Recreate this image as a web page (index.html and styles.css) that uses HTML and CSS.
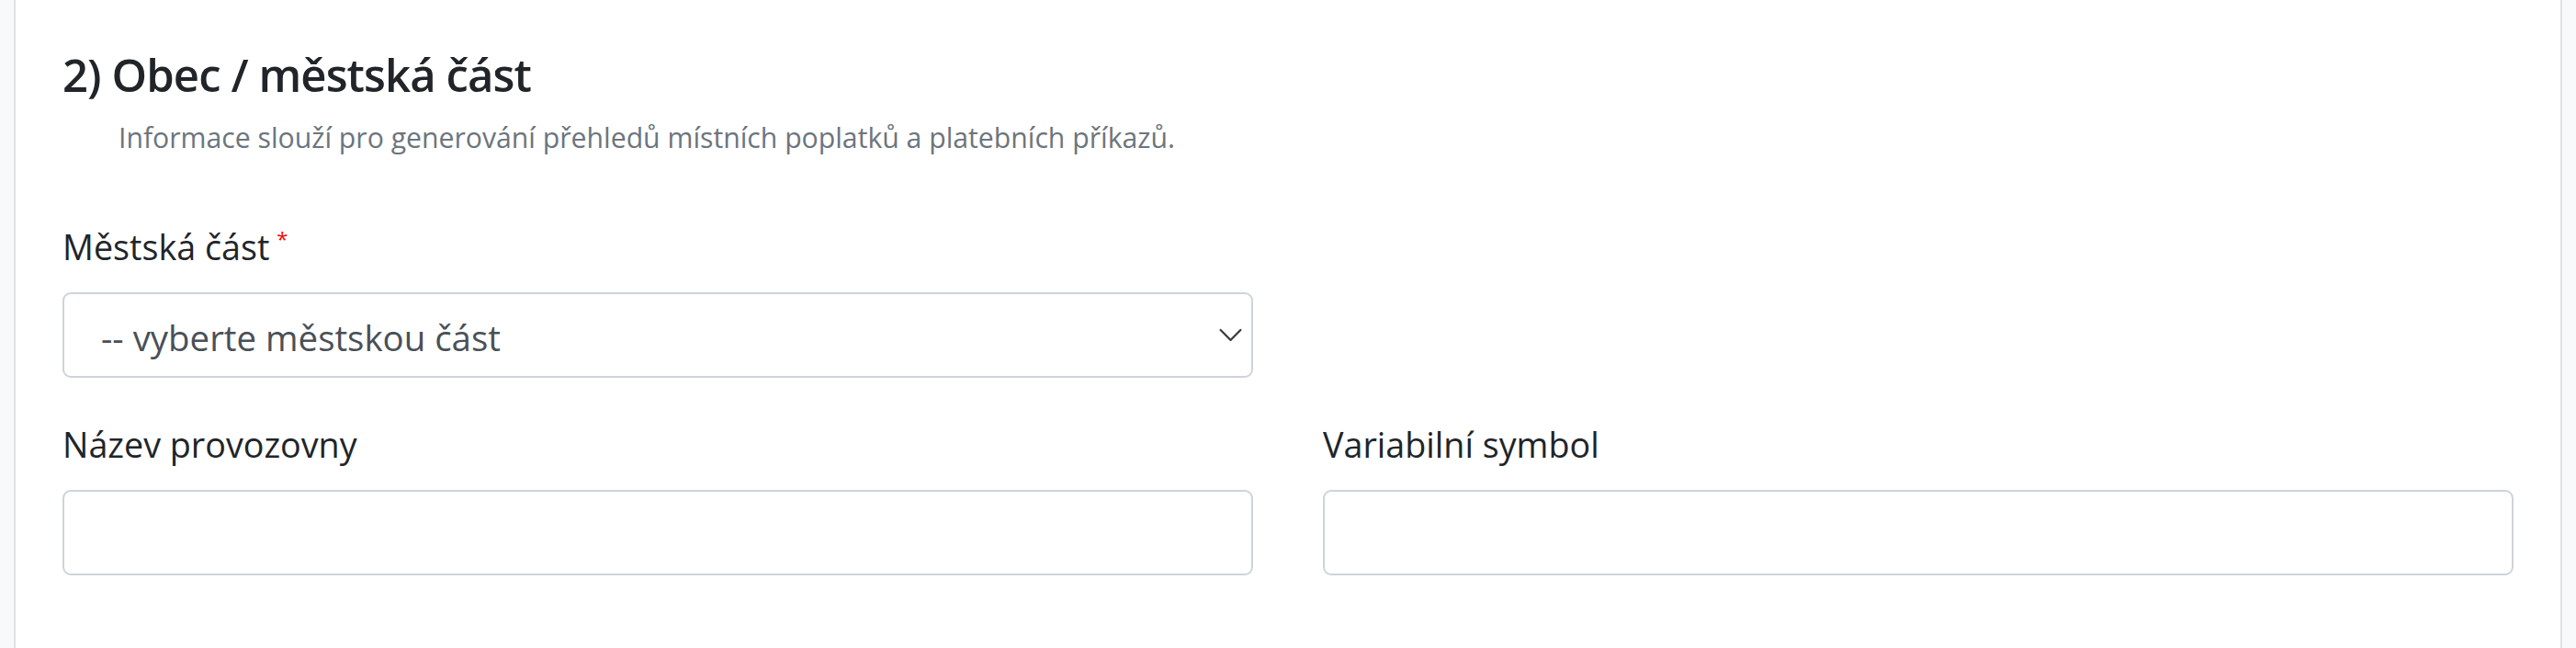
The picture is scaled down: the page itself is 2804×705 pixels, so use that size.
FILE: index.html
```html
<!DOCTYPE html>
<html lang="cs">
<head>
<meta charset="utf-8">
<title>Obec / městská část</title>
<link rel="stylesheet" href="styles.css">
</head>
<body>
<div class="card">
  <h4 class="section-title">2) Obec / městská část</h4>
  <p class="section-hint">Informace slouží pro generování přehledů místních poplatků a platebních příkazů.</p>

  <div class="row">
    <div class="field">
      <label class="field-label" for="mc">Městská část<sup class="req">*</sup></label>
      <div class="select-wrap">
        <select id="mc" class="control select">
          <option>-- vyberte městskou část</option>
        </select>
        <svg class="chevron" viewBox="0 0 16 16" width="29" height="29" aria-hidden="true"><path d="M2 5l6 6 6-6" fill="none" stroke="#343a40" stroke-width="1.25" stroke-linecap="round" stroke-linejoin="round"/></svg>
      </div>
    </div>
    <div class="field"></div>
  </div>

  <div class="row row-second">
    <div class="field">
      <label class="field-label" for="np">Název provozovny</label>
      <input id="np" class="control" type="text">
    </div>
    <div class="field">
      <label class="field-label" for="vs">Variabilní symbol</label>
      <input id="vs" class="control" type="text">
    </div>
  </div>
</div>
</body>
</html>
```

FILE: styles.css
```css
html, body {
  margin: 0;
  padding: 0;
  height: 100%;
}
body {
  background: #f8f9fa;
  font-family: "Open Sans", "Noto Sans", "Liberation Sans", sans-serif;
  color: #212529;
}
.card {
  box-sizing: border-box;
  min-height: 100%;
  margin: 0 15px;
  background: #ffffff;
  border-left: 2px solid #dee2e6;
  border-right: 2px solid #dee2e6;
  padding: 51px 51px 40px;
}
.section-title {
  margin: 0;
  font-size: 49px;
  line-height: 61px;
  font-weight: 600;
  letter-spacing: -0.9px;
  color: #212529;
}
.section-hint {
  margin: 15px 0 0 61px;
  font-size: 30.2px;
  line-height: 46px;
  color: #6c757d;
}
.row {
  display: grid;
  grid-template-columns: 1fr 1fr;
  column-gap: 76px;
  margin-top: 69px;
}
.row-second {
  margin-top: 46px;
}
.field {
  display: flex;
  flex-direction: column;
}
.field-label {
  font-size: 37.7px;
  line-height: 54px;
  margin-bottom: 22px;
  color: #212529;
}
.req {
  color: #ff0000;
  font-size: 22px;
  line-height: 0;
  margin-left: 8px;
  vertical-align: 15px;
}
.control {
  box-sizing: border-box;
  width: 100%;
  height: 93px;
  margin: 0;
  border: 2px solid #ced4da;
  border-radius: 9px;
  background: #ffffff;
  font-family: inherit;
  font-size: 38.4px;
  color: #495057;
  padding: 0 40px;
  outline: none;
}
.select-wrap {
  position: relative;
}
.select {
  appearance: none;
  -webkit-appearance: none;
  padding-top: 4px;
  padding-right: 60px;
}
.chevron {
  position: absolute;
  right: 10px;
  top: 32px;
  pointer-events: none;
}
```
